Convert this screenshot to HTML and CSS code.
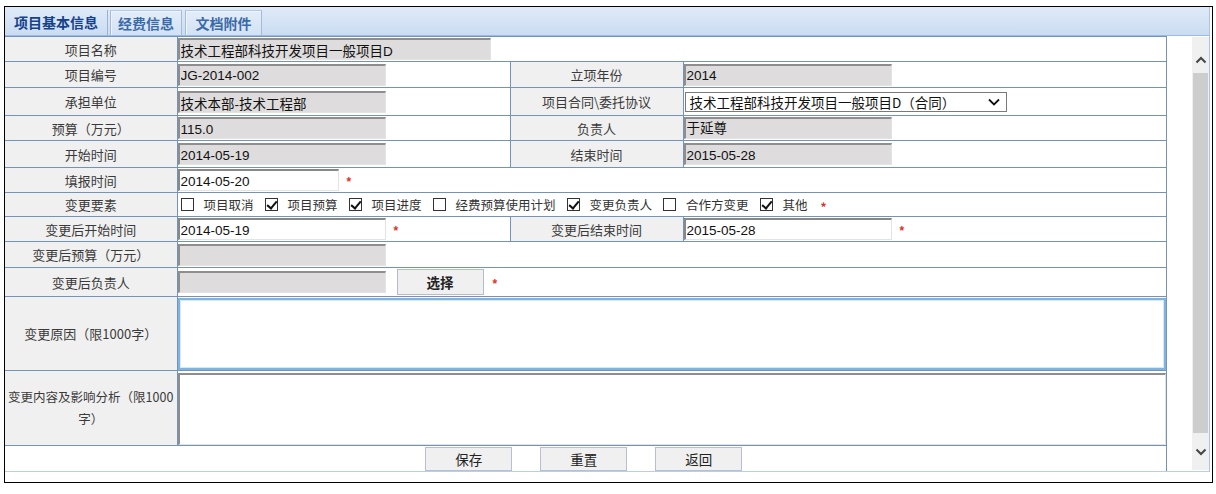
FILE: index.html
```html
<!DOCTYPE html>
<html lang="zh-CN">
<head>
<meta charset="utf-8">
<title>项目变更</title>
<link rel="stylesheet" href="styles.css">
</head>
<body>
<div class="frame">
  <div class="panel">
    <div class="tabbar">
      <div class="tab active">项目基本信息</div>
      <div class="tab t2">经费信息</div>
      <div class="tab t3">文档附件</div>
    </div>
    <div class="panel-body">
      <table class="form">
        <colgroup>
          <col class="c-label"><col class="c-value"><col class="c-label2"><col class="c-value2">
        </colgroup>
        <tr class="r25">
          <td class="lbl">项目名称</td>
          <td colspan="3"><input class="fld ro w-long" value="技术工程部科技开发项目一般项目D" readonly></td>
        </tr>
        <tr class="r26">
          <td class="lbl">项目编号</td>
          <td><input class="fld ro" value="JG-2014-002" readonly></td>
          <td class="lbl">立项年份</td>
          <td><input class="fld ro" value="2014" readonly></td>
        </tr>
        <tr class="r28">
          <td class="lbl">承担单位</td>
          <td><input class="fld ro" value="技术本部-技术工程部" readonly></td>
          <td class="lbl">项目合同\委托协议</td>
          <td>
            <div class="select">
              <span class="select-text">技术工程部科技开发项目一般项目D（合同）</span>
              <svg class="select-arrow" width="12" height="8" viewBox="0 0 12 8"><path d="M1 1.5 L6 6.5 L11 1.5" fill="none" stroke="#111" stroke-width="1.8"/></svg>
            </div>
          </td>
        </tr>
        <tr class="r25">
          <td class="lbl">预算（万元）</td>
          <td><input class="fld ro" value="115.0" readonly></td>
          <td class="lbl">负责人</td>
          <td><input class="fld ro top" value="于延尊" readonly></td>
        </tr>
        <tr class="r27">
          <td class="lbl">开始时间</td>
          <td><input class="fld ro" value="2014-05-19" readonly></td>
          <td class="lbl">结束时间</td>
          <td><input class="fld ro" value="2015-05-28" readonly></td>
        </tr>
        <tr class="r25">
          <td class="lbl">填报时间</td>
          <td colspan="3"><div class="line"><input class="fld w-short" value="2014-05-20"><span class="req">*</span></div></td>
        </tr>
        <tr class="r24">
          <td class="lbl">变更要素</td>
          <td colspan="3">
            <div class="checks">
              <span class="chk"></span><span class="chk-text">项目取消</span>
              <span class="chk on"></span><span class="chk-text">项目预算</span>
              <span class="chk on"></span><span class="chk-text">项目进度</span>
              <span class="chk"></span><span class="chk-text">经费预算使用计划</span>
              <span class="chk on"></span><span class="chk-text">变更负责人</span>
              <span class="chk"></span><span class="chk-text">合作方变更</span>
              <span class="chk on"></span><span class="chk-text last">其他</span>
              <span class="req">*</span>
            </div>
          </td>
        </tr>
        <tr class="r25">
          <td class="lbl">变更后开始时间</td>
          <td><div class="line"><input class="fld" value="2014-05-19"><span class="req">*</span></div></td>
          <td class="lbl">变更后结束时间</td>
          <td><div class="line"><input class="fld" value="2015-05-28"><span class="req">*</span></div></td>
        </tr>
        <tr class="r26">
          <td class="lbl">变更后预算（万元）</td>
          <td colspan="3"><input class="fld ro" value="" readonly></td>
        </tr>
        <tr class="r29">
          <td class="lbl">变更后负责人</td>
          <td colspan="3"><div class="line"><input class="fld ro" value="" readonly><button class="btn pick">选择</button><span class="req">*</span></div></td>
        </tr>
        <tr class="r74">
          <td class="lbl">变更原因（限1000字）</td>
          <td colspan="3"><textarea class="area focus"></textarea></td>
        </tr>
        <tr class="r75">
          <td class="lbl tight">变更内容及影响分析（限1000<wbr>字）</td>
          <td colspan="3"><textarea class="area"></textarea></td>
        </tr>
        <tr class="r25 actions">
          <td colspan="4">
            <div class="buttons">
              <button class="btn act">保存</button>
              <button class="btn act">重置</button>
              <button class="btn act">返回</button>
            </div>
          </td>
        </tr>
      </table>
      <div class="spacer"></div>
      <div class="scrollbar">
        <div class="sb-btn"><svg width="12" height="8" viewBox="0 0 12 8"><path d="M1.5 6.5 L6 2 L10.5 6.5" fill="none" stroke="#444" stroke-width="2"/></svg></div>
        <div class="sb-thumb"></div>
        <div class="sb-btn down"><svg width="12" height="8" viewBox="0 0 12 8"><path d="M1.5 1.5 L6 6 L10.5 1.5" fill="none" stroke="#444" stroke-width="2"/></svg></div>
      </div>
    </div>
  </div>
</div>
</body>
</html>
```

FILE: styles.css
```css
* { box-sizing: border-box; }

body {
  margin: 0;
  background: #fff;
  font-family: "Liberation Sans", "Noto Sans CJK SC", sans-serif;
  font-size: 13px;
  color: #333;
}

.frame {
  margin: 6px 0 0 4px;
  width: 1209px;
  height: 477px;
  border: 1px solid #000;
}

.panel {
  width: 1205px;
  border-right: 1px solid #a9c4e6;
  border-bottom: 1px solid #b9cfe9;
}

.tabbar {
  height: 29px;
  display: flex;
  align-items: stretch;
  background: linear-gradient(#dfeaf8, #cbdcf2);
  border-bottom: 1px solid #99bbe8;
  padding-top: 3px;
}

.tab {
  display: flex;
  align-items: center;
  justify-content: center;
  font-family: "Noto Sans CJK SC", sans-serif;
  font-weight: bold;
  font-size: 14px;
  color: #3b6aa9;
  border-left: 1px solid #a6bbd8;
  border-right: 1px solid #a6bbd8;
  border-top: 1px solid #b6c9e3;
  box-shadow: inset 1px 1px 0 #eef4fc;
  background: linear-gradient(#e4edf9, #d2e1f4);
}

.tab.active {
  width: 103px;
  color: #15428b;
  border-left: none;
  border-top: none;
  border-right: 1px solid #9db2cf;
  box-shadow: none;
  background: none;
  padding-bottom: 1px;
}

.tab.t2 { width: 72px; margin-left: 2px; }
.tab.t3 { width: 77px; margin-left: 3px; }

.panel-body {
  display: flex;
  align-items: stretch;
  height: 435px;
}

.form {
  width: 1161px;
  flex: none;
  border-collapse: collapse;
  table-layout: fixed;
}

.c-label { width: 172px; }
.c-value { width: 333px; }
.c-label2 { width: 173px; }
.c-value2 { width: 483px; }

.form td {
  border: 1px solid #7393bb;
  padding: 0;
  vertical-align: middle;
}

.form td:first-child { border-left: none; }

.r24 { height: 24px; }
.r25 { height: 25px; }
.r26 { height: 26px; }
.r27 { height: 27px; }
.r28 { height: 28px; }
.r29 { height: 29px; }
.r74 { height: 74px; }
.r75 { height: 75px; }

.lbl {
  background: #f0f0f0;
  text-align: center;
  font-family: "Noto Sans CJK SC", sans-serif;
  font-size: 13px;
  line-height: 19px;
  color: #3a3a3a;
}

.lbl.tight { font-size: 12.5px; line-height: 22px; }

.fld {
  display: block;
  width: 208px;
  height: 22px;
  margin: 0;
  padding: 1px 1px 0 1px;
  font-family: "Liberation Sans", "Noto Sans CJK SC", sans-serif;
  font-size: 13.5px;
  color: #111;
  background: #fff;
  border-top: 2px solid #888;
  border-left: 2px solid #888;
  border-right: 1px solid #e3e3e3;
  border-bottom: 1px solid #e3e3e3;
  outline: none;
}

.fld.ro { background: #dedcdc; border-top-color: #8e8e8e; border-left-color: #8e8e8e; }
.fld.w-long { width: 313px; }
.fld.w-short { width: 161px; }
.fld.top { padding-bottom: 4px; }

.line {
  display: flex;
  align-items: center;
}

.req {
  color: #e0302a;
  font-size: 12px;
  font-weight: bold;
  margin-left: 8px;
  line-height: 12px;
  padding-top: 4px;
}

.select {
  width: 322px;
  height: 20px;
  margin-left: 1px;
  display: flex;
  align-items: center;
  justify-content: space-between;
  border: 1px solid #7a7a7a;
  background: #fff;
  padding: 0 6px 0 4px;
  font-family: "Noto Sans CJK SC", sans-serif;
  font-size: 13.5px;
  color: #111;
}

.checks {
  display: flex;
  align-items: center;
  padding-left: 3px;
  font-family: "Noto Sans CJK SC", sans-serif;
  font-size: 12.5px;
  color: #333;
}

.checks .req { margin-left: 13px; }

.chk {
  width: 13px;
  height: 13px;
  border: 1px solid #333;
  background: #fff;
  position: relative;
  margin-right: 10px;
}

.chk.on::after {
  content: "";
  position: absolute;
  left: 3px;
  top: 0px;
  width: 4px;
  height: 8px;
  border-right: 2px solid #111;
  border-bottom: 2px solid #111;
  transform: rotate(40deg);
}

.chk-text { margin-right: 11px; line-height: 16px; }
.chk-text.last { margin-right: 0; }

.btn {
  width: 87px;
  height: 25px;
  margin: 0;
  padding: 0;
  background: #f0f0f0;
  border: 1px solid #b3bccb;
  font-family: "Noto Sans CJK SC", sans-serif;
  font-size: 13.5px;
  color: #222;
}

.btn.pick { margin-left: 11px; height: 26px; font-weight: bold; }
.btn.pick + .req { margin-left: 9px; }

.area {
  display: block;
  width: 988px;
  height: 72px;
  margin: 1px 0 0 0;
  resize: none;
  border-top: 2px solid #8e8e8e;
  border-left: 2px solid #8e8e8e;
  border-right: 1px solid #e3e3e3;
  border-bottom: 1px solid #e3e3e3;
  background: #fff;
  outline: none;
}

.area.focus {
  border: 2px solid #7eb4de;
  box-shadow: inset 0 0 0 1px #d6e8f6;
}

.actions td { border-left: none; border-bottom: none; }

.buttons {
  display: flex;
  justify-content: center;
  gap: 28px;
  padding-right: 3px;
}

.btn.act { height: 24px; border-color: #b7bfd2; }

.spacer { flex: 1; }

.scrollbar {
  width: 17px;
  flex: none;
  margin-top: 1px;
  margin-bottom: 1px;
  display: flex;
  flex-direction: column;
  background: #f0f0f0;
}

.sb-btn {
  height: 36px;
  display: flex;
  align-items: flex-end;
  justify-content: center;
  padding-bottom: 9px;
}

.sb-btn.down {
  align-items: center;
  padding-bottom: 0;
  height: 37px;
}

.sb-thumb {
  flex: 1;
  background: #cdcdcd;
  margin: 0 1px;
}
```
